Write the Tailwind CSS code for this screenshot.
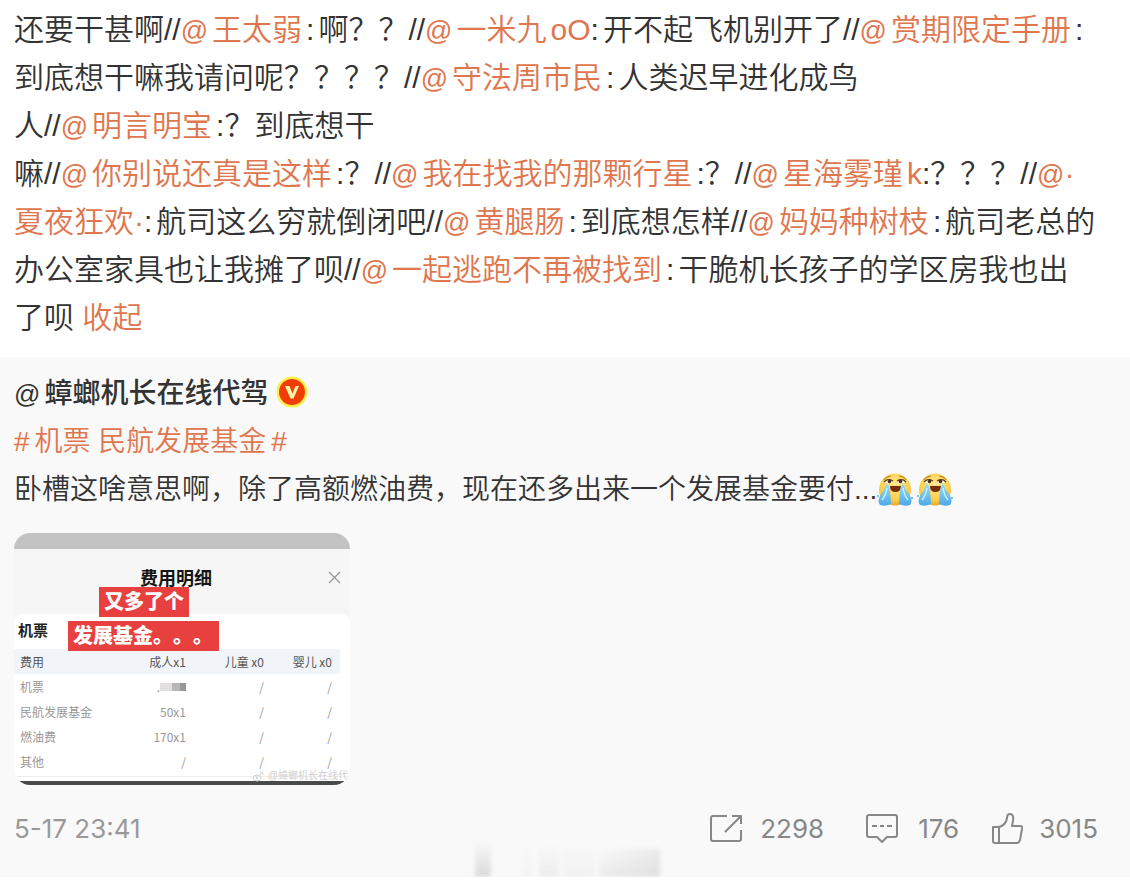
<!DOCTYPE html>
<html lang="zh-CN">

<head>
  <title>微博</title>
  <meta charset="UTF-8">
  <meta name="viewport" content="width=device-width, initial-scale=1.0">
  <script src="https://cdn.jsdelivr.net/npm/@tailwindcss/browser@4"></script>
</head>

<body class="bg-white text-[#333] font-['Liberation_Sans','Noto_Sans_CJK_SC',sans-serif]">
  <!-- Repost chain -->
  <p class="px-[14px] pt-[6px] text-[30px] leading-[48px] font-[350]">
    还要干甚啊//<a href="#" class="mr-1 text-[#e0764e]"><span class="mr-1 text-[27px] leading-none">@</span>王太弱</a>:<span class="ml-1">啊？？</span>//<a href="#" class="text-[#e0764e]"><span class="mr-1 text-[27px] leading-none">@</span>一米九<span class="ml-1">oO</span></a>:<span class="ml-1">开不起飞机别开了</span>//<a href="#" class="mr-1 text-[#e0764e]"><span class="mr-1 text-[27px] leading-none">@</span>赏期限定手册</a>:<br>
    到底想干嘛我请问呢？？？？//<a href="#" class="mr-1 text-[#e0764e]"><span class="mr-1 text-[27px] leading-none">@</span>守法周市民</a>:<span class="ml-1">人类迟早进化成鸟</span><br>
    人//<a href="#" class="mr-1 text-[#e0764e]"><span class="mr-1 text-[27px] leading-none">@</span>明言明宝</a>:？到底想干<br>
    嘛//<a href="#" class="mr-1 text-[#e0764e]"><span class="mr-1 text-[27px] leading-none">@</span>你别说还真是这样</a>:？//<a href="#" class="mr-1 text-[#e0764e]"><span class="mr-1 text-[27px] leading-none">@</span>我在找我的那颗行星</a>:？//<a href="#" class="text-[#e0764e]"><span class="mr-1 text-[27px] leading-none">@</span>星海雾瑾<span class="ml-1">k</span></a>:？？？//<a href="#" class="text-[#e0764e]"><span class="text-[27px] leading-none">@</span>·<br>
    夏夜狂欢·</a>:<span class="ml-1">航司这么穷就倒闭吧</span>//<a href="#" class="mr-1 text-[#e0764e]"><span class="mr-1 text-[27px] leading-none">@</span>黄腿肠</a>:<span class="ml-1">到底想怎样</span>//<a href="#" class="mr-1 text-[#e0764e]"><span class="mr-1 text-[27px] leading-none">@</span>妈妈种树枝</a>:<span class="ml-1">航司老总的</span><br>
    办公室家具也让我摊了呗//<a href="#" class="mr-1 text-[#e0764e]"><span class="mr-1 text-[27px] leading-none">@</span>一起逃跑不再被找到</a>:<span class="ml-1">干脆机长孩子的学区房我也出</span><br>
    了呗 <a href="#" class="text-[#e0764e]">收起</a>
  </p>

  <!-- Original post -->
  <article class="relative mt-[15px] bg-[#f9f9f9] px-[14px] pt-[13px] pb-6 text-[28px] leading-[48px] font-[350]">
    <div class="flex items-center">
      <a href="#" class="font-medium"><span class="mr-1 text-[26px] leading-none">@</span>蟑螂机长在线代驾</a>
      <svg class="mb-1 ml-2 size-8" viewBox="0 0 32 32" aria-label="认证">
        <circle cx="16" cy="16" r="15.5" fill="#fff04a" />
        <circle cx="16" cy="16" r="13" fill="#f03c05" />
        <path d="M9 10h4.500l3 7.500 3-7.500H23l-5.500 12.500h-3z" fill="#fff5a8" />
      </svg>
    </div>
    <div><a href="#" class="text-[#e0764e]">#<span class="mx-[5px]">机票 民航发展基金</span>#</a></div>
    <div class="flex items-center">
      <p>卧槽这啥意思啊，除了高额燃油费，现在还多出来一个发展基金要付...</p>
      <svg class="h-9 w-10" viewBox="0 0 40 36" aria-label="泪">
        <defs>
          <radialGradient id="face" cx="50%" cy="35%" r="65%">
            <stop offset="0" stop-color="#ffe88a" />
            <stop offset=".7" stop-color="#fcd04b" />
            <stop offset="1" stop-color="#e9a92d" />
          </radialGradient>
          <linearGradient id="tear" x1="0" y1="0" x2="0" y2="1">
            <stop offset="0" stop-color="#9fdcf8" />
            <stop offset="1" stop-color="#4aa9e6" />
          </linearGradient>
          <g id="cry">
            <circle cx="18" cy="17.500" r="16" fill="url(#face)" />
            <path d="M7 8q3-4 7-4M22 4q4 0 7 4" stroke="#b87a26" stroke-width="1.200" fill="none" />
            <path d="M7 10q4-4 9 0-4 3-9 0zM20 10q5-4 9 0-5 3-9 0z" fill="#fff" />
            <path d="M7 10q4-4 9-1M20 9q5-3 9 1" stroke="#5b3a18" stroke-width="1.200" fill="none" />
            <circle cx="12.500" cy="9.500" r="1.800" fill="#4a2b12" />
            <circle cx="23.500" cy="9.500" r="1.800" fill="#4a2b12" />
            <path d="M13 14h11q0 6-5.500 6T13 14z" fill="#762c0f" />
            <path d="M10 11q3 4 3 9 1 8 1 12-6 3-11 1-3-4 0-9 4-5 7-13z" fill="url(#tear)" />
            <path d="M26 11q-3 4-3 9-1 8-1 12 6 3 11 1 3-4 0-9-4-5-7-13z" fill="url(#tear)" />
            <path d="M10 16q-1 7-5 12M26 16q1 7 5 12" stroke="#c9f0ff" stroke-width="1.500" fill="none" />
            <circle cx="1" cy="24" r="1" fill="#55afe3" />
            <circle cx="35" cy="26" r="1" fill="#55afe3" />
          </g>
        </defs>
        <use href="#cry" />
      </svg>
      <svg class="h-9 w-10" viewBox="0 0 40 36" aria-label="泪">
        <use href="#cry" />
      </svg>
    </div>

    <!-- Attached picture: fare details sheet -->
    <figure class="relative mt-[19px] w-[336px] overflow-hidden rounded-2xl bg-[#f6f6f6] text-xs leading-4">
      <div class="h-4 bg-[#c3c3c3]"></div>
      <div class="relative flex h-[65px] justify-center pt-5">
        <h2 class="pr-3 text-lg leading-5 font-bold text-[#151515]">费用明细</h2>
        <button class="absolute top-[22px] right-[9px]" aria-label="关闭">
          <svg class="size-[13px]" viewBox="0 0 13 13" stroke="#999" stroke-width="1.300">
            <path d="M1 1l11 11M12 1L1 12" />
          </svg>
        </button>
      </div>
      <div class="rounded-t-lg bg-white">
        <h3 class="h-[35px] pt-[7px] pl-1 text-[15px] leading-5 font-bold text-[#222]">机票</h3>
        <table class="w-[326px] table-fixed text-right font-['Noto_Sans_CJK_SC',sans-serif] font-normal text-[#999]">
          <thead class="bg-[#f1f5fa] text-[#555]">
            <tr class="h-[25px]">
              <th class="w-[96px] pl-[6px] text-left font-normal">费用</th>
              <th class="w-[76px] font-normal">成人x1</th>
              <th class="w-[78px] font-normal">儿童 x0</th>
              <th class="pr-2 font-normal">婴儿 x0</th>
            </tr>
          </thead>
          <tbody>
            <tr class="h-[25px]">
              <td class="pl-[6px] text-left">机票</td>
              <td>
                <div class="flex items-center justify-end">.<i class="h-2 w-3 bg-[#e2dfdf]"></i><i class="h-2 w-2 bg-[#b8b6b6]"></i><i class="h-2 w-[6px] bg-[#969696]"></i></div>
              </td>
              <td>/</td>
              <td class="pr-2">/</td>
            </tr>
            <tr class="h-[25px]">
              <td class="pl-[6px] text-left">民航发展基金</td>
              <td>50x1</td>
              <td>/</td>
              <td class="pr-2">/</td>
            </tr>
            <tr class="h-[25px]">
              <td class="pl-[6px] text-left">燃油费</td>
              <td>170x1</td>
              <td>/</td>
              <td class="pr-2">/</td>
            </tr>
            <tr class="h-[25px]">
              <td class="pl-[6px] text-left">其他</td>
              <td>/</td>
              <td>/</td>
              <td class="pr-2">/</td>
            </tr>
          </tbody>
        </table>
        <div class="mt-[2px] h-[5px] border-t border-[#eee]"></div>
      </div>
      <div class="h-1 bg-[#484b4a]"></div>
      <span class="absolute top-[54px] left-[85px] h-[30px] w-[90px] bg-[#e8403f] text-center text-xl leading-[30px] font-black text-white">又多了个</span>
      <span class="absolute top-[88px] left-[54px] h-[30px] w-[151px] bg-[#e8403f] pl-[5px] text-xl leading-[30px] font-black whitespace-nowrap text-white [text-spacing-trim:space-all]">发展基金。。。</span>
      <span class="absolute right-[2px] bottom-[3px] flex items-center text-[10px] leading-3 text-[#ccc]">
        <svg class="mr-1 h-3 w-3" viewBox="0 0 12 12" fill="none" stroke="#ccc">
          <ellipse cx="5" cy="8" rx="4" ry="3" />
          <circle cx="5" cy="8" r="1" />
          <path d="M8 2q3 0 3 3M8 4l1 1" />
        </svg>@蟑螂机长在线代
      </span>
    </figure>

    <footer class="mt-5 flex items-center justify-between pr-[18px] font-['Inter',sans-serif] text-[26px] font-normal text-[#888]">
      <time class="text-[#999]">5-17 23:41</time>
      <div class="flex">
        <button class="mr-[42px] flex items-center gap-[18px]" aria-label="转发">
          <svg class="size-8" viewBox="0 0 32 32" fill="none" stroke="#888" stroke-width="2" stroke-linejoin="round">
            <path d="M17 3H3q-2 0-2 2v21q0 2 2 2h26q2 0 2-2V17M15 19L30 4M22 3h9v8" />
          </svg>2298
        </button>
        <button class="mr-8 flex items-center gap-5" aria-label="评论">
          <svg class="size-8" viewBox="0 0 32 32" fill="none" stroke="#888" stroke-width="2" stroke-linejoin="round">
            <path d="M3 2h26q2 0 2 2v18q0 2-2 2h-8l-5 5-5-5H3q-2 0-2-2V4q0-2 2-2z" />
            <path d="M6 13h5M14 13h4M21 13h5" />
          </svg>176
        </button>
        <button class="flex items-center gap-4" aria-label="赞">
          <svg class="size-8" viewBox="0 0 32 32" fill="none" stroke="#888" stroke-width="2" stroke-linejoin="round">
            <path d="M2 14h6q7-2 8-9 0-4 3-4 4 0 3 7l-1 5h8q3 0 2 3l-2 11q-1 3-3 3H4q-2 0-2-2zM8 14v16" />
          </svg>3015
        </button>
      </div>
    </footer>

    <!-- Faded watermark on the bottom edge -->
    <div class="absolute bottom-0 left-[475px] flex h-9 w-[185px] items-end blur-[2px]" aria-hidden="true">
      <i class="h-9 w-4 bg-linear-to-b from-transparent to-[#dadada]"></i>
      <i class="ml-8 h-7 w-2 bg-linear-to-b from-transparent to-[#f2f2f2]"></i>
      <i class="ml-2 h-8 w-5 bg-linear-to-b from-transparent to-[#ececec]"></i>
      <i class="ml-1 h-8 w-8 bg-linear-to-b from-transparent to-[#f1f1f1]"></i>
      <i class="ml-1 h-7 grow bg-linear-to-br from-transparent to-[#dfdfdf]"></i>
    </div>
  </article>
</body>

</html>
